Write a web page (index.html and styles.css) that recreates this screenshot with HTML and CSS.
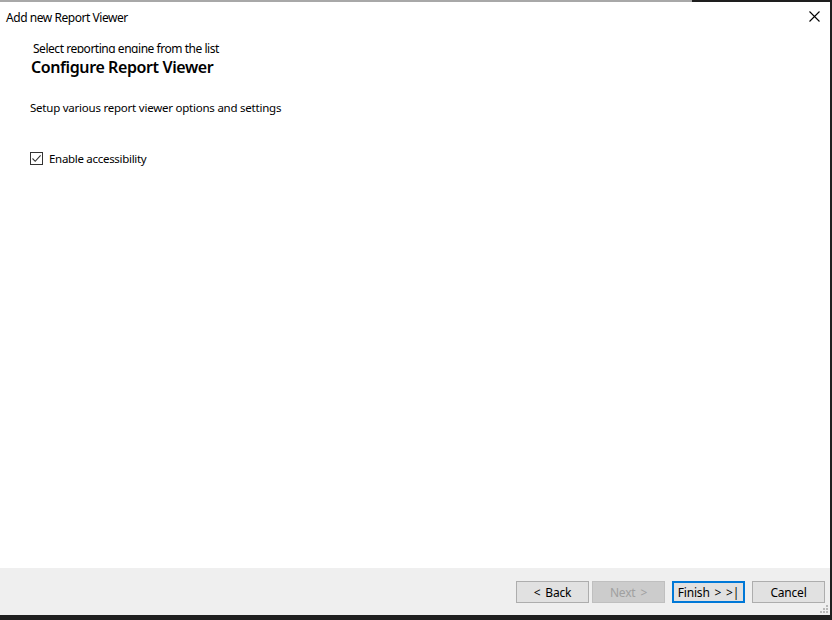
FILE: index.html
```html
<!DOCTYPE html>
<html lang="en">
<head>
  <meta charset="UTF-8">
  <title>Add new Report Viewer</title>
  <link rel="stylesheet" href="styles.css">
</head>
<body>
<div class="desktop">
  <div class="behind">
    <div class="behind-light"></div>
    <div class="behind-dark"></div>
  </div>
  <div class="window">
    <div class="titlebar">
      <span class="title">Add new Report Viewer</span>
      <span class="close">
        <svg width="11" height="11" viewBox="0 0 11 11"><path d="M0.5 0.5 L10.5 10.5 M10.5 0.5 L0.5 10.5" stroke="#000" stroke-width="1.1" fill="none"/></svg>
      </span>
    </div>
    <div class="header">
      <div class="prev-step">Select reporting engine from the list</div>
      <h1>Configure Report Viewer</h1>
    </div>
    <div class="content">
      <p class="desc">Setup various report viewer options and settings</p>
      <label class="check">
        <span class="box">
          <svg width="11" height="11" viewBox="0 0 11 11"><path d="M1.5 5.5 L4.2 8.3 L9.6 2.3" stroke="#333" stroke-width="1.1" fill="none"/></svg>
        </span>
        Enable accessibility
      </label>
    </div>
    <div class="footer">
      <button class="btn">&lt; Back</button>
      <button class="btn" disabled>Next &gt;</button>
      <button class="btn btn-default">Finish &gt; &gt;|</button>
      <button class="btn btn-cancel">Cancel</button>
      <span class="grip">
        <svg width="8" height="8" viewBox="0 0 8 8" fill="#b8b8b8">
          <rect x="6" y="0" width="2" height="2"/>
          <rect x="3" y="3" width="2" height="2"/><rect x="6" y="3" width="2" height="2"/>
          <rect x="0" y="6" width="2" height="2"/><rect x="3" y="6" width="2" height="2"/><rect x="6" y="6" width="2" height="2"/>
        </svg>
      </span>
    </div>
  </div>
</div>
</body>
</html>
```

FILE: styles.css
```css
body {
  margin: 0;
  font-family: "Noto Sans", "Open Sans", sans-serif;
  font-size: 12px;
  color: #000;
  background-color: #1f1f1f;
}
.desktop {
  width: 832px;
  height: 620px;
  overflow: hidden;
}
.behind {
  display: flex;
  height: 2px;
}
.behind-light {
  width: 692px;
  background-color: #a8a8a8;
}
.behind-dark {
  flex: 1;
  background-color: #1e1e1e;
}
.window {
  width: 830px;
  height: 613px;
  background-color: #fff;
  display: flex;
  flex-direction: column;
}
.titlebar {
  height: 30px;
  display: flex;
  align-items: center;
  justify-content: space-between;
  padding: 0 10px 0 6px;
  flex-shrink: 0;
}
.title {
  font-size: 12px;
  letter-spacing: -0.45px;
}
.close {
  display: flex;
  margin-top: -1px;
}
.header {
  padding: 0 0 0 31px;
}
/* previous step caption, partly hidden under the heading */
.prev-step {
  height: 12px;
  overflow: hidden;
  line-height: 15px;
  margin: 9px 0 0 2px;
  font-size: 12px;
  letter-spacing: -0.47px;
}
h1 {
  margin: 3px 0 0;
  font-size: 16px;
  font-weight: 600;
  letter-spacing: -0.4px;
  line-height: 22px;
}
.content {
  flex: 1;
  padding: 0 30px;
}
.desc {
  margin: 22px 0 0;
  font-size: 11.5px;
  letter-spacing: -0.23px;
}
.check {
  display: flex;
  align-items: center;
  gap: 6px;
  margin-top: 36px;
  font-size: 11.5px;
  letter-spacing: -0.3px;
}
.box {
  width: 11px;
  height: 11px;
  border: 1px solid #333;
  display: flex;
}
.footer {
  position: relative;
  height: 47px;
  flex-shrink: 0;
  background-color: #efefef;
  display: flex;
  align-items: flex-start;
  justify-content: flex-end;
  gap: 3px;
  padding: 13px 5px 0 0;
  box-sizing: border-box;
}
.btn {
  width: 73px;
  height: 22px;
  font-family: inherit;
  font-size: 12px;
  letter-spacing: -0.2px;
  word-spacing: 2px;
  color: #000;
  background-color: #e1e1e1;
  border: 1px solid #adadad;
  padding: 0;
}
.btn:disabled {
  color: #a0a0a0;
  background-color: #cccccc;
  border-color: #bfbfbf;
}
.btn-default {
  margin-left: 4px;
  border: 2px solid #0078d7;
}
.btn-cancel {
  margin-left: 4px;
}
.grip {
  position: absolute;
  right: 2px;
  bottom: 2px;
  display: flex;
}
```
